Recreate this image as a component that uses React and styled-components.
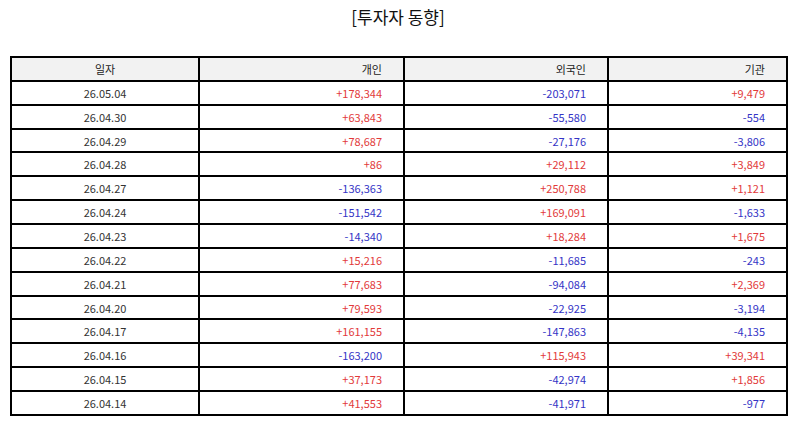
import React from 'react';
import styled, { createGlobalStyle } from 'styled-components';

const GlobalStyle = createGlobalStyle`
  body {
    margin: 0;
    background: #fff;
    font-family: "Noto Sans CJK KR", "Noto Sans", sans-serif;
  }
`;

const Page = styled.div`
  width: 795px;
  height: 425px;
  box-sizing: border-box;
  padding: 0 9px 0 10px;
`;

const Title = styled.h1`
  margin: 0;
  height: 56px;
  padding-top: 5px;
  box-sizing: border-box;
  text-align: center;
  font-size: 17px;
  font-weight: 400;
  color: #111;
  line-height: 24px;
`;

const Table = styled.table`
  width: 776px;
  border-collapse: collapse;
  table-layout: fixed;
  border: 2px solid #000;
  font-size: 11px;
`;

const Row = styled.tr`
  height: 23.87px;
`;

const HeadCell = styled.th`
  border: 2px solid #000;
  background: #f2f2f2;
  font-weight: 400;
  color: #222;
  padding: 0 ${(p) => (p.$center ? '0' : '21px')} 0 0;
  text-align: ${(p) => (p.$center ? 'center' : 'right')};
`;

const Cell = styled.td`
  border: 2px solid #000;
  padding: 0 ${(p) => (p.$center ? '0' : '21px')} 0 0;
  text-align: ${(p) => (p.$center ? 'center' : 'right')};
  color: ${(p) => {
    if (p.$tone === 'up') return '#e23a3a';
    if (p.$tone === 'down') return '#3434c6';
    return '#333';
  }};
`;

const rows = [
  ['26.05.04', '+178,344', '-203,071', '+9,479'],
  ['26.04.30', '+63,843', '-55,580', '-554'],
  ['26.04.29', '+78,687', '-27,176', '-3,806'],
  ['26.04.28', '+86', '+29,112', '+3,849'],
  ['26.04.27', '-136,363', '+250,788', '+1,121'],
  ['26.04.24', '-151,542', '+169,091', '-1,633'],
  ['26.04.23', '-14,340', '+18,284', '+1,675'],
  ['26.04.22', '+15,216', '-11,685', '-243'],
  ['26.04.21', '+77,683', '-94,084', '+2,369'],
  ['26.04.20', '+79,593', '-22,925', '-3,194'],
  ['26.04.17', '+161,155', '-147,863', '-4,135'],
  ['26.04.16', '-163,200', '+115,943', '+39,341'],
  ['26.04.15', '+37,173', '-42,974', '+1,856'],
  ['26.04.14', '+41,553', '-41,971', '-977'],
];

const tone = (v) => (v.startsWith('+') ? 'up' : 'down');

export default function App() {
  return (
    <>
      <GlobalStyle />
      <Page>
        <Title>[투자자 동향]</Title>
        <Table>
          <colgroup>
            <col style={{ width: 188 }} />
            <col style={{ width: 205 }} />
            <col style={{ width: 204 }} />
            <col style={{ width: 179 }} />
          </colgroup>
          <thead>
            <Row>
              <HeadCell $center>일자</HeadCell>
              <HeadCell>개인</HeadCell>
              <HeadCell>외국인</HeadCell>
              <HeadCell>기관</HeadCell>
            </Row>
          </thead>
          <tbody>
            {rows.map(([date, person, foreign, inst]) => (
              <Row key={date}>
                <Cell $center>{date}</Cell>
                <Cell $tone={tone(person)}>{person}</Cell>
                <Cell $tone={tone(foreign)}>{foreign}</Cell>
                <Cell $tone={tone(inst)}>{inst}</Cell>
              </Row>
            ))}
          </tbody>
        </Table>
      </Page>
    </>
  );
}
